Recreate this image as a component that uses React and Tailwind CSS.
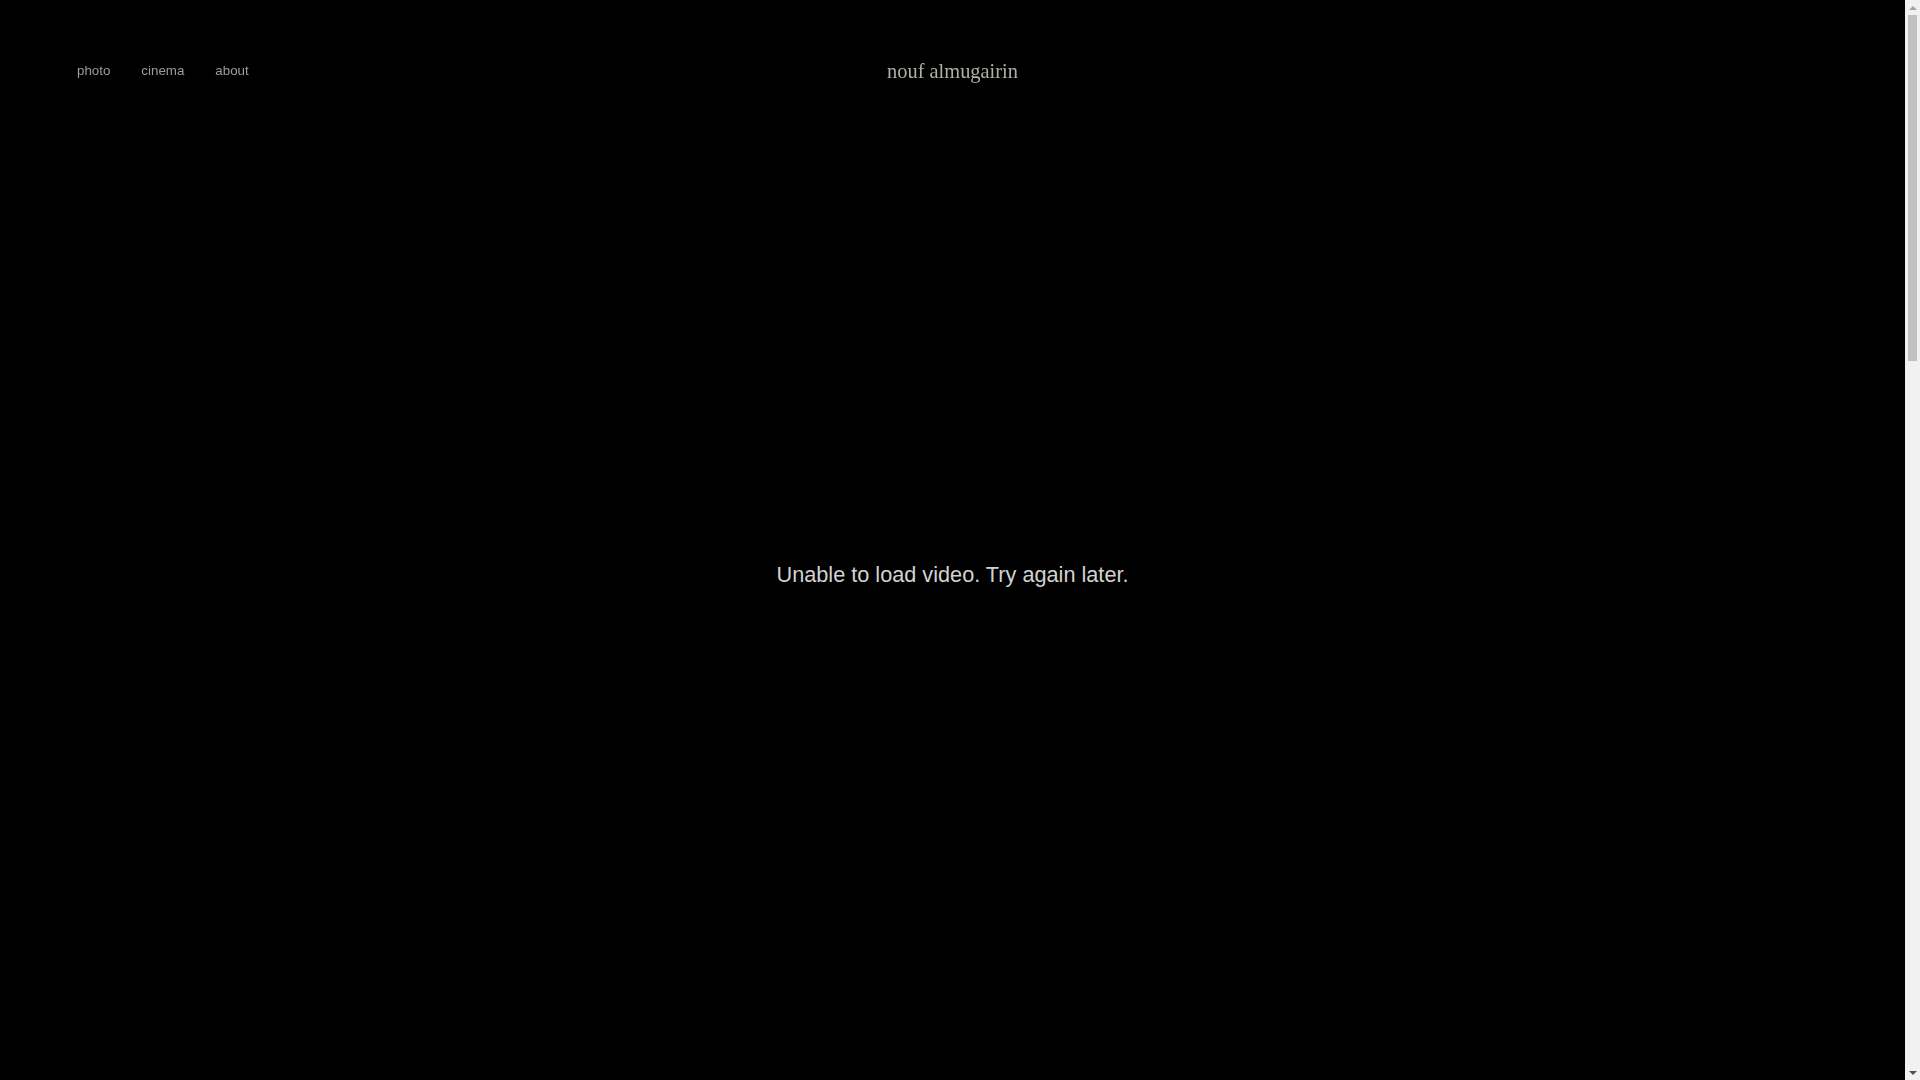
import React from "react";

function VideoBlock({ message }) {
  return (
    <div className="w-full aspect-video bg-black flex items-center justify-center">
      {message && (
        <p
          className="text-[21.7px] text-[#d2d2d2] leading-normal"
          style={{ fontFamily: '"Liberation Sans", Arial, sans-serif' }}
        >
          {message}
        </p>
      )}
    </div>
  );
}

function FakeScrollbar() {
  return (
    <div className="fixed top-0 right-0 w-[15px] h-screen bg-[#f1f1f1] flex flex-col items-center z-20">
      <div className="h-[15px] w-full flex items-center justify-center">
        <div className="w-0 h-0 border-l-[4px] border-r-[4px] border-b-[4px] border-l-transparent border-r-transparent border-b-[#a3a3a3]" />
      </div>
      <div className="w-[9px] h-[346px] bg-[#c1c1c1]" />
      <div className="flex-1" />
      <div className="h-[15px] w-full flex items-center justify-center">
        <div className="w-0 h-0 border-l-[4px] border-r-[4px] border-t-[4px] border-l-transparent border-r-transparent border-t-[#505050]" />
      </div>
    </div>
  );
}

export default function App() {
  return (
    <div className="min-h-screen bg-black pr-[15px]">
      <header className="fixed top-0 left-0 right-[15px] z-10 h-[100px] pointer-events-none">
        <nav
          className="absolute left-[77px] top-[63px] flex gap-[31px] text-[13.33px] leading-[15px] text-[#9c9d96] pointer-events-auto"
          style={{ fontFamily: '"Liberation Sans", Arial, sans-serif' }}
        >
          <a href="#">photo</a>
          <a href="#">cinema</a>
          <a href="#">about</a>
        </nav>
        <div
          className="absolute left-0 right-0 top-[60px] text-center text-[20.4px] leading-[23px] text-[#aeb0a6]"
          style={{ fontFamily: '"Liberation Serif", "Times New Roman", serif' }}
        >
          nouf almugairin
        </div>
      </header>
      <main className="pt-[39px] pb-[28px] flex flex-col">
        <VideoBlock message="Unable to load video. Try again later." />
        <VideoBlock />
        <VideoBlock />
      </main>
      <FakeScrollbar />
    </div>
  );
}
